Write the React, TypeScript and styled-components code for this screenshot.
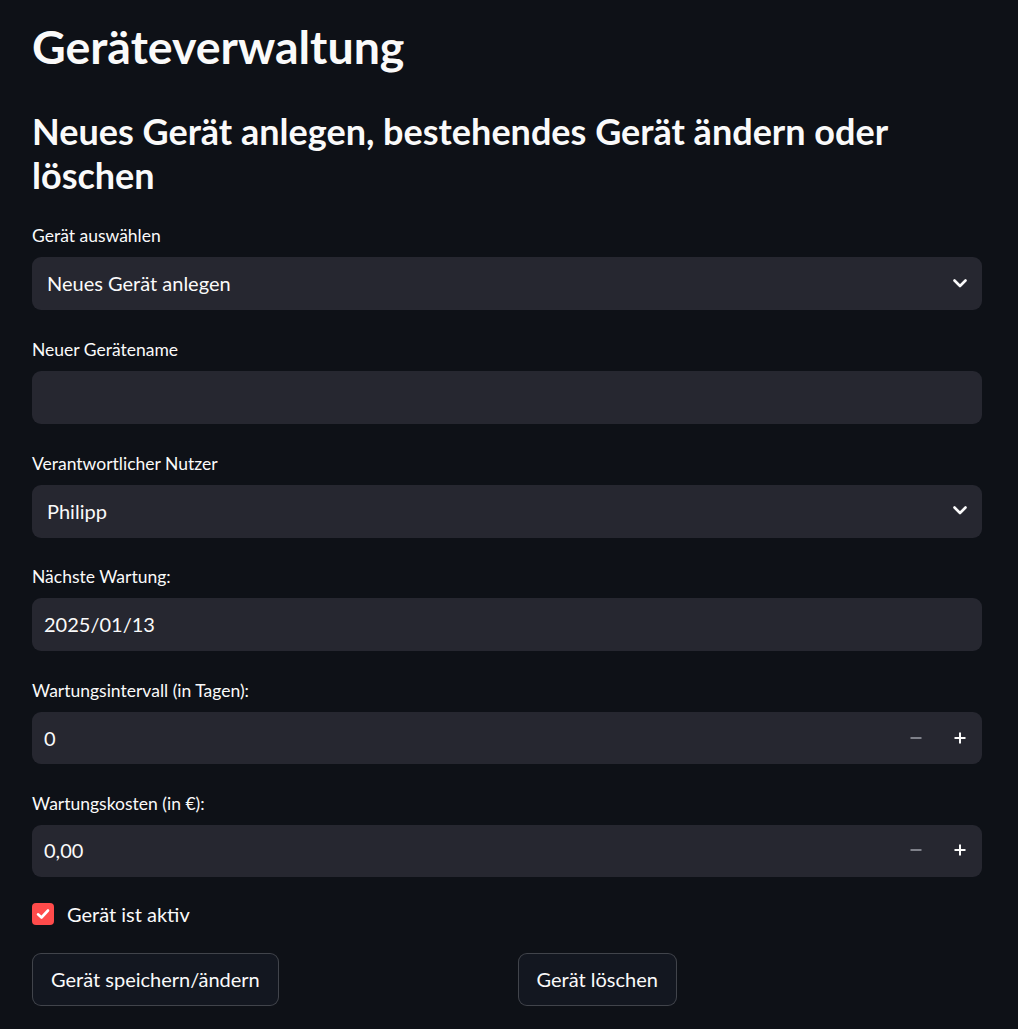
import React from "react";
import styled, { createGlobalStyle } from "styled-components";

const Global = createGlobalStyle`
  html, body { margin: 0; padding: 0; background: #0e1117; }
  body { font-family: "Lato", "Source Sans Pro", "Noto Sans", sans-serif; color: #fafafa; }
  * { box-sizing: border-box; }
`;

const Page = styled.main`
  width: 1018px;
  min-height: 1029px;
  padding: 18px 36px 0 32px;
  display: flex;
  flex-direction: column;
`;

const Title = styled.h1`
  margin: 0;
  font-size: 46.5px;
  line-height: 56px;
  font-weight: 700;
  color: #fafafa;
`;

const SubTitle = styled.h2`
  margin: 35px 0 0 0;
  font-size: 36px;
  line-height: 44px;
  font-weight: 700;
  color: #fafafa;
`;

const Form = styled.div`
  margin-top: 27px;
  display: flex;
  flex-direction: column;
  gap: 27.8px;
`;

const Field = styled.div`
  display: flex;
  flex-direction: column;
  gap: 9px;
`;

const Label = styled.label`
  font-size: 17.5px;
  line-height: 24px;
  color: #fafafa;
`;

const Control = styled.div<{ $pad?: number; $h?: number }>`
  height: ${(p) => p.$h ?? 53}px;
  background: #262730;
  border-radius: 9px;
  display: flex;
  align-items: center;
  padding-left: ${(p) => p.$pad ?? 15}px;
  padding-bottom: 1px;
  font-size: 20px;
  color: #fafafa;
`;

const Value = styled.span`
  flex: 1;
`;

const IconSlot = styled.span`
  width: 44px;
  height: 100%;
  display: flex;
  align-items: center;
  justify-content: center;
`;

const StepButton = styled.span`
  width: 44px;
  height: 100%;
  display: flex;
  align-items: center;
  justify-content: center;
`;

const CheckRow = styled.div`
  display: flex;
  align-items: center;
  gap: 13px;
  margin-top: -3px;
  font-size: 20px;
  line-height: 24px;
`;

const Box = styled.span`
  width: 22px;
  height: 22px;
  border-radius: 4px;
  background: #ff4b4b;
  display: flex;
  align-items: center;
  justify-content: center;
`;

const Buttons = styled.div`
  display: grid;
  grid-template-columns: 1fr 1fr;
  column-gap: 21px;
  margin-top: -1px;
`;

const Button = styled.button`
  justify-self: start;
  height: 53px;
  padding: 0 18px;
  border-radius: 9px;
  border: 1px solid rgba(250, 250, 250, 0.2);
  background: #131720;
  color: #fafafa;
  font-family: inherit;
  font-size: 20px;
`;

const Chevron = () => (
  <svg width="14" height="9" viewBox="0 0 14 9">
    <polyline points="1.5,1.5 7,7 12.5,1.5" fill="none" stroke="#fafafa" strokeWidth="2.6" strokeLinecap="round" strokeLinejoin="round" />
  </svg>
);

const Minus = () => (
  <svg width="12" height="12" viewBox="0 0 12 12">
    <rect x="0.5" y="5" width="11" height="2" fill="#7f818a" />
  </svg>
);

const Plus = () => (
  <svg width="12" height="12" viewBox="0 0 12 12">
    <rect x="0.5" y="5" width="11" height="2" fill="#fafafa" />
    <rect x="5" y="0.5" width="2" height="11" fill="#fafafa" />
  </svg>
);

const Check = () => (
  <svg width="16" height="16" viewBox="0 0 16 16">
    <polyline points="3,8.3 6.5,11.5 13,4.5" fill="none" stroke="#ffffff" strokeWidth="2.6" strokeLinecap="round" strokeLinejoin="round" />
  </svg>
);

const SelectField = ({ label, value }: { label: string; value: string }) => (
  <Field>
    <Label>{label}</Label>
    <Control>
      <Value>{value}</Value>
      <IconSlot><Chevron /></IconSlot>
    </Control>
  </Field>
);

const TextField = ({ label, value }: { label: string; value: string }) => (
  <Field>
    <Label>{label}</Label>
    <Control $pad={12}>
      <Value>{value}</Value>
    </Control>
  </Field>
);

const NumberField = ({ label, value }: { label: string; value: string }) => (
  <Field>
    <Label>{label}</Label>
    <Control $pad={12} $h={52}>
      <Value>{value}</Value>
      <StepButton><Minus /></StepButton>
      <StepButton><Plus /></StepButton>
    </Control>
  </Field>
);

export default function App() {
  return (
    <>
      <Global />
      <Page>
        <Title>Geräteverwaltung</Title>
        <SubTitle>Neues Gerät anlegen, bestehendes Gerät ändern oder löschen</SubTitle>
        <Form>
          <SelectField label="Gerät auswählen" value="Neues Gerät anlegen" />
          <TextField label="Neuer Gerätename" value="" />
          <SelectField label="Verantwortlicher Nutzer" value="Philipp" />
          <TextField label="Nächste Wartung:" value="2025/01/13" />
          <NumberField label="Wartungsintervall (in Tagen):" value="0" />
          <NumberField label="Wartungskosten (in €):" value="0,00" />
          <CheckRow>
            <Box><Check /></Box>
            <span>Gerät ist aktiv</span>
          </CheckRow>
          <Buttons>
            <Button>Gerät speichern/ändern</Button>
            <Button>Gerät löschen</Button>
          </Buttons>
        </Form>
      </Page>
    </>
  );
}
